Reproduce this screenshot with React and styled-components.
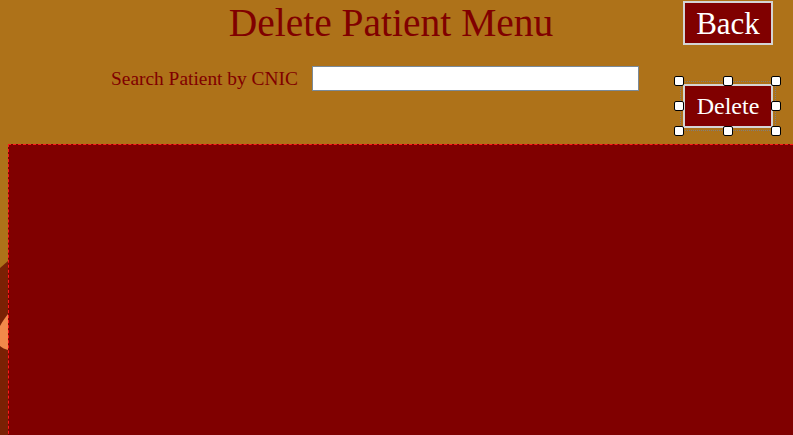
import React from "react";
import styled, { createGlobalStyle } from "styled-components";

const Global = createGlobalStyle`
  html, body { margin: 0; padding: 0; }
  body {
    background: #ae7219;
    font-family: "Liberation Serif", "Times New Roman", serif;
    overflow: hidden;
  }
`;

const Page = styled.div`
  width: 793px;
  height: 435px;
  display: flex;
  flex-direction: column;
  overflow: hidden;
  background: #ae7219;
`;

const Header = styled.div`
  height: 144px;
  flex: none;
  display: grid;
  grid-template-columns: 1fr 96px;
  grid-template-rows: 46px auto;
  padding-right: 17px;
`;

const Title = styled.h1`
  grid-column: 1 / -1;
  grid-row: 1;
  margin: 0;
  padding: 3px 0 0 6px;
  text-align: center;
  font-weight: normal;
  font-size: 39.5px;
  line-height: 40px;
  color: #800000;
`;

const Button = styled.button`
  width: 90px;
  height: 44px;
  box-sizing: border-box;
  background: #800000;
  border: 2px solid #d4d4d4;
  color: #ffffff;
  font-family: "Liberation Serif", "Times New Roman", serif;
  font-size: ${(p) => p.$size}px;
  line-height: 1;
  padding: 0;
  display: flex;
  align-items: center;
  justify-content: center;
  cursor: pointer;
`;

const BackSlot = styled.div`
  grid-column: 2;
  grid-row: 1;
  justify-self: center;
  padding-top: 1px;
`;

const SearchRow = styled.div`
  grid-column: 1;
  grid-row: 2;
  display: flex;
  align-items: center;
  align-self: start;
  gap: 14px;
  margin-top: 20px;
  padding-left: 111px;
`;

const Label = styled.label`
  font-size: 19.4px;
  color: #800000;
`;

const Input = styled.input`
  width: 327px;
  height: 25px;
  box-sizing: border-box;
  border: 1px solid #7a8a99;
  background: #ffffff;
  padding: 0 4px;
  font-family: "Liberation Serif", serif;
  outline: none;
`;

const Selection = styled.div`
  grid-column: 2;
  grid-row: 2;
  align-self: start;
  position: relative;
  margin-top: 35px;
  padding: 2px;
  border: 1px dotted #7f7f7f;
  width: max-content;
`;

const Handle = styled.span`
  position: absolute;
  width: 10px;
  height: 10px;
  box-sizing: border-box;
  background: #ffffff;
  border: 1px solid #000000;
  border-radius: 2px;
  left: ${(p) => p.$x};
  top: ${(p) => p.$y};
  transform: translate(-50%, -50%);
`;

const Body = styled.div`
  flex: 1;
  display: flex;
  min-height: 0;
`;

const Strip = styled.div`
  width: 8px;
  flex: none;
  display: flex;
  flex-direction: column;
  margin-top: -144px;
`;

const Panel = styled.div`
  flex: 1;
  margin-right: -10px;
  height: 320px;
  background: #800000;
  border: 1px dashed #ff1a1a;
  box-sizing: border-box;
`;

const handles = [
  ["-2px", "-1px"], ["50%", "-1px"], ["calc(100% + 1px)", "-1px"],
  ["-2px", "50%"], ["calc(100% + 1px)", "50%"],
  ["-2px", "calc(100% + 1px)"], ["50%", "calc(100% + 1px)"], ["calc(100% + 1px)", "calc(100% + 1px)"],
];

export default function App() {
  return (
    <Page>
      <Global />
      <Header>
        <Title>Delete Patient Menu</Title>
        <BackSlot>
          <Button $size={31}>Back</Button>
        </BackSlot>
        <SearchRow>
          <Label htmlFor="cnic">Search Patient by CNIC</Label>
          <Input id="cnic" type="text" />
        </SearchRow>
        <Selection>
          <Button $size={24}>Delete</Button>
          {handles.map(([x, y], i) => (
            <Handle key={i} $x={x} $y={y} />
          ))}
        </Selection>
      </Header>
      <Body>
        <Strip>
          <svg width="8" height="435" viewBox="0 0 8 435">
            <rect x="0" y="0" width="8" height="435" fill="#ae7219" />
            <path d="M0 268 L8 261 L8 435 L0 435 Z" fill="#7a2104" />
            <path d="M8 314 C5 318 2 322 0 326 L0 346 C2 348 5 349 8 350 Z" fill="#f2894a" />
          </svg>
        </Strip>
        <Panel />
      </Body>
    </Page>
  );
}
